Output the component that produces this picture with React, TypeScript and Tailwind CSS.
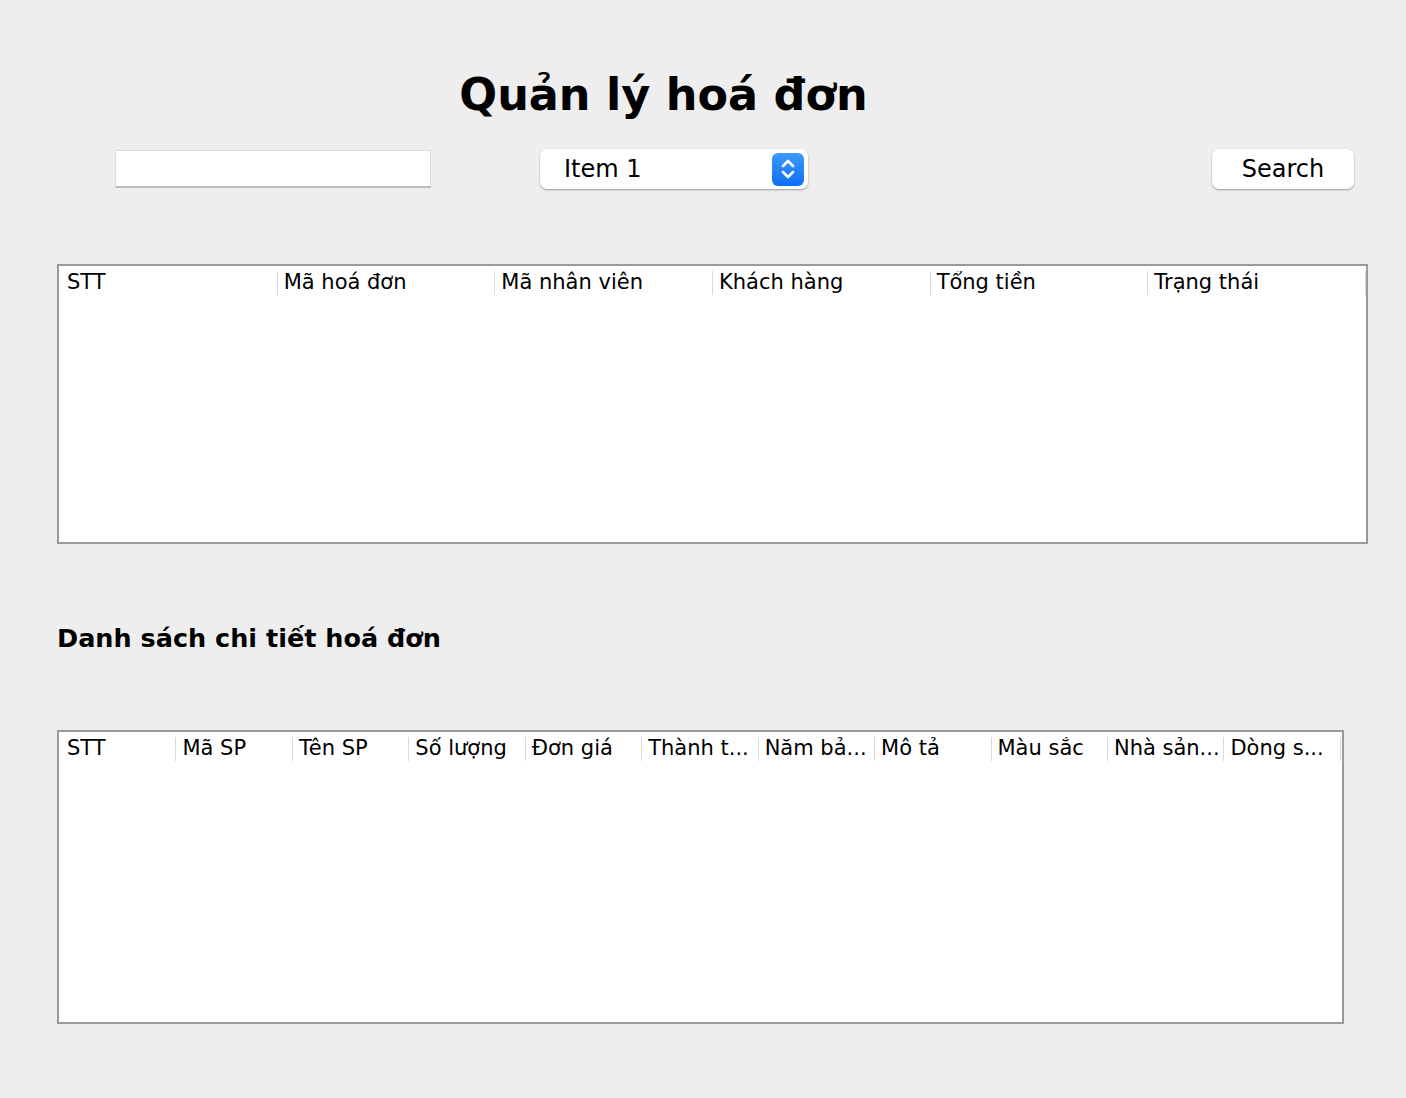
import React from "react";

const font = { fontFamily: '"DejaVu Sans", "Liberation Sans", sans-serif' };

function Header({ cols, widthClass }: { cols: string[]; widthClass: string }) {
  return (
    <div className="flex h-[33px] items-center bg-white">
      {cols.map((c, i) => (
        <div key={i} className={`${widthClass} flex h-[24px] items-center overflow-hidden whitespace-nowrap ${i === 0 ? "pl-[8px]" : "pl-[6px] border-l border-[#d9d9d9]"}`}>
          <span className="text-[21px] leading-none text-black">{c}</span>
        </div>
      ))}
      <div className="h-[24px] border-l border-[#d9d9d9]" />
    </div>
  );
}

export default function App() {
  const cols1 = ["STT", "Mã hoá đơn", "Mã nhân viên", "Khách hàng", "Tổng tiền", "Trạng thái"];
  const cols2 = ["STT", "Mã SP", "Tên SP", "Số lượng", "Đơn giá", "Thành t...", "Năm bả...", "Mô tả", "Màu sắc", "Nhà sản...", "Dòng s..."];
  return (
    <div className="w-[1406px] h-[1098px] bg-[#eeeeee] overflow-hidden" style={font}>
      <div className="flex justify-center pt-[65px] pr-[79px]">
        <h1 className="text-[44.5px] font-bold leading-[60px] text-black">Quản lý hoá đơn</h1>
      </div>
      <div className="flex items-center mt-[23px] h-[42px]">
        <div className="ml-[115px] w-[316px] h-[38px] bg-white border border-[#dcdcdc] border-b-[2px] border-b-[#bdbdbd]" />
        <div className="ml-[109px] w-[268px] h-[40px] bg-white rounded-[7px] shadow-[0_1px_2px_rgba(0,0,0,0.35)] flex items-center justify-between pl-[24px] pr-[4px]">
          <span className="text-[24px] text-black leading-none">Item 1</span>
          <div className="w-[32px] h-[33px] rounded-[6px] bg-gradient-to-b from-[#3b99fc] to-[#0f6ff5] flex items-center justify-center">
            <svg width="16" height="24" viewBox="0 0 16 24" fill="none" stroke="white" strokeWidth="2.6" strokeLinecap="round" strokeLinejoin="round">
              <path d="M3 9 L8 4 L13 9" />
              <path d="M3 15 L8 20 L13 15" />
            </svg>
          </div>
        </div>
        <div className="ml-[404px] w-[142px] h-[40px] bg-white rounded-[7px] shadow-[0_1px_2px_rgba(0,0,0,0.35)] flex items-center justify-center">
          <span className="text-[24px] text-black leading-none">Search</span>
        </div>
      </div>
      <div className="ml-[57px] mt-[74px] w-[1311px] h-[280px] bg-white border-2 border-[#9a9a9a]">
        <Header cols={cols1} widthClass="w-[217.66px] shrink-0" />
      </div>
      <div className="ml-[57px] mt-[75px] h-[40px] flex items-center">
        <h2 className="text-[25.5px] font-bold text-black leading-none">Danh sách chi tiết hoá đơn</h2>
      </div>
      <div className="ml-[57px] mt-[71px] w-[1287px] h-[294px] bg-white border-2 border-[#9a9a9a]">
        <Header cols={cols2} widthClass="w-[116.45px] shrink-0" />
      </div>
    </div>
  );
}
